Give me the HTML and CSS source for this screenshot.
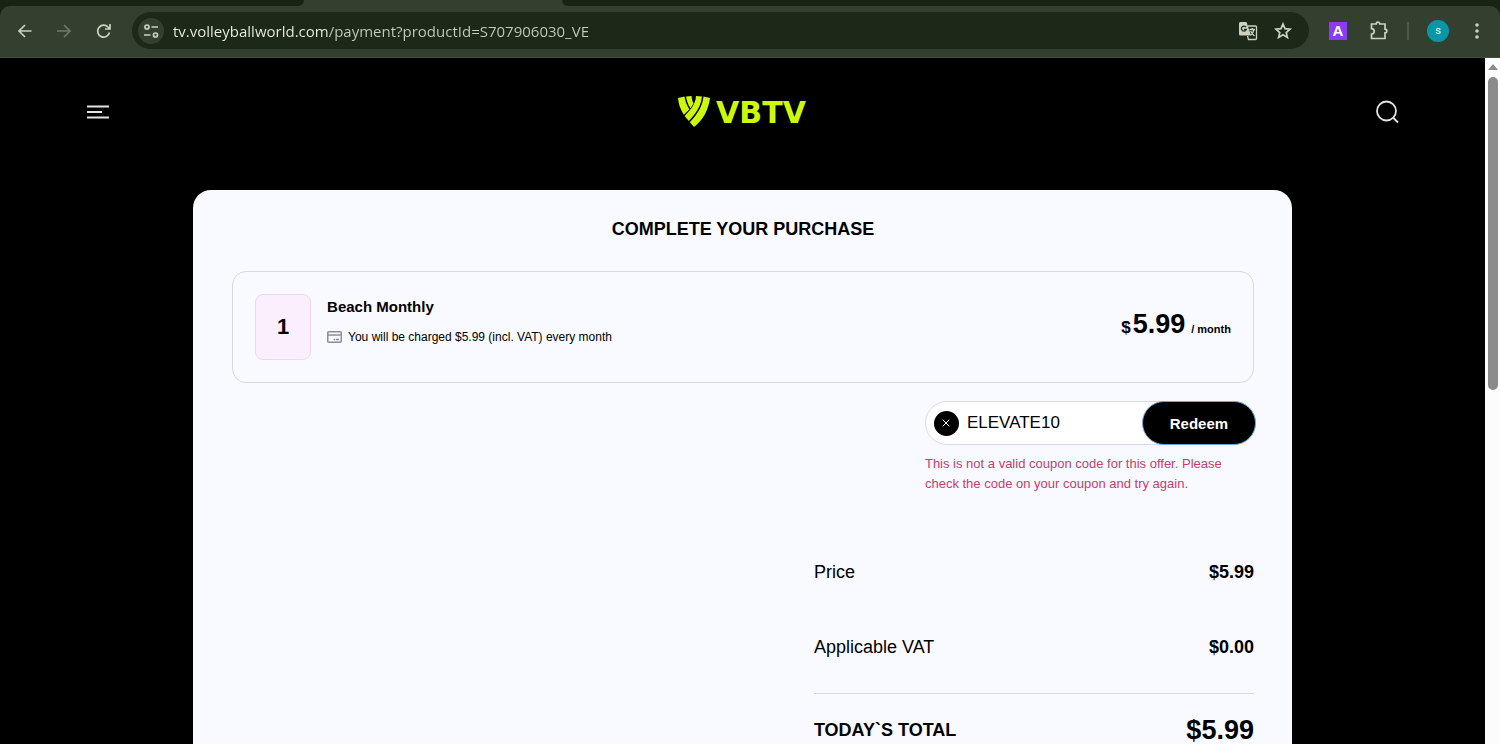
FILE: index.html
```
<!DOCTYPE html>
<html lang="en">
<head>
    <meta charset="UTF-8">
    <meta name="viewport" content="width=device-width, initial-scale=1.0">
    <title>VBTV - Complete your purchase</title>
    <link rel="stylesheet" href="styles.css">
</head>
<body>
    <div class="tab-strip">
        <div class="tabs-left"></div>
        <div class="tab-active"></div>
        <div class="tabs-right"></div>
    </div>
    <div class="toolbar">
        <button type="button" class="nav-btn" aria-label="Back">
            <svg width="20" height="20" viewBox="0 0 20 20"><path d="M16.500 10H4M10 4L4 10L10 16"/></svg>
        </button>
        <button type="button" class="nav-btn dim" aria-label="Forward">
            <svg width="20" height="20" viewBox="0 0 20 20"><path d="M3 10H16M10 4L16 10L10 16"/></svg>
        </button>
        <button type="button" class="nav-btn" aria-label="Reload">
            <svg width="20" height="20" viewBox="0 0 20 20"><path d="M16.500 11.500A6 6 0 1 1 15 6L16.500 7.500M17 3V8H12"/></svg>
        </button>
        <div class="address-bar">
            <button type="button" class="site-info" aria-label="Site information">
                <svg width="16" height="16" viewBox="0 0 16 16"><circle cx="4" cy="4" r="2"/><path d="M8.500 4H15M1 12H7.500"/><circle cx="12.500" cy="12" r="2"/></svg>
            </button>
            <input type="text" class="url" aria-label="Address" value="tv.volleyballworld.com/payment?productId=S707906030_VE">
            <button type="button" class="tool-btn" aria-label="Translate this page">
                <svg width="20" height="20" viewBox="0 0 20 20">
                    <path class="fill" d="M2.500 1H8.500L13 14.500H2.500A1.500 1.500 0 0 1 1 13V2.500A1.500 1.500 0 0 1 2.500 1Z"/>
                    <path class="thin" d="M10 5H17.500A1 1 0 0 1 18.500 6V17.500A1 1 0 0 1 17.500 18.500H10.500L9.500 15M11.500 8.500H17M14.200 7V8.500M16 8.500C15.500 11 14 13 12.500 14.300M12.600 10C13.500 12 15 13.500 16.500 15"/>
                    <path class="dark" d="M8 6.200A2.500 2.500 0 1 0 8.300 8.400H6"/>
                </svg>
            </button>
            <button type="button" class="tool-btn" aria-label="Bookmark this page">
                <svg width="20" height="20" viewBox="0 0 20 20"><path d="M10 3L12 7.700L17 8.200L13.200 11.500L14.400 16.400L10 13.800L5.600 16.400L6.800 11.500L3 8.200L8 7.700Z"/></svg>
            </button>
        </div>
        <button type="button" class="extension" aria-label="Extension">A</button>
        <button type="button" class="tool-btn" aria-label="Extensions">
            <svg width="22" height="22" viewBox="0 0 22 22"><path d="M3.500 4H8.200A1.800 1.800 0 0 1 11.800 4H17V9.200A1.800 1.800 0 0 1 17 12.800V18.500H3.500V14A2.700 2.700 0 0 0 3.500 8.600Z"/></svg>
        </button>
        <span class="divider"></span>
        <button type="button" class="profile" aria-label="Profile">s</button>
        <button type="button" class="tool-btn" aria-label="Browser menu">
            <svg width="20" height="20" viewBox="0 0 20 20"><g class="fill"><circle cx="10" cy="4" r="1.800"/><circle cx="10" cy="10" r="1.800"/><circle cx="10" cy="16" r="1.800"/></g></svg>
        </button>
    </div>

    <div class="window">
        <div class="page">
            <header class="site-header">
                <button type="button" class="header-btn" aria-label="Menu">
                    <svg width="22" height="22" viewBox="0 0 22 22"><path d="M0 5.500H22M0 11H15M0 16.500H22"/></svg>
                </button>
                <a href="#" class="logo">
                    <svg width="32" height="32" viewBox="0 0 32 32">
                        <path d="M0 2L6.500 0.600C7.500 6 9 10 11.500 13.300L5.800 18.700C2.500 13.500 0.500 8 0 2Z"/>
                        <path d="M8 0.500L13.500 0C13.800 3 14.300 5 15.500 7.500L12.500 12.200C10 9 8.800 5 8 0.500Z"/>
                        <path d="M18 0L24 0.500C23.200 9 18.500 17 10.800 25L6.600 20C13 13.500 17.500 8 18 0Z"/>
                        <path d="M25.500 0.600L32 2C30.500 14 25 24 16 31L11.800 26.300C19.500 18.500 24.500 10 25.500 0.600Z"/>
                    </svg>
                    <span>VBTV</span>
                </a>
                <button type="button" class="header-btn" aria-label="Search">
                    <svg width="24" height="24" viewBox="0 0 24 24"><circle cx="11.500" cy="11" r="9.500"/><path d="M18 17.500L23 22.500"/></svg>
                </button>
            </header>

            <main class="card">
                <h1>COMPLETE YOUR PURCHASE</h1>

                <section class="plan">
                    <div class="plan-number">1</div>
                    <div class="plan-info">
                        <h2>Beach Monthly</h2>
                        <p>
                            <svg width="15" height="12" viewBox="0 0 15 12"><rect x="0.750" y="0.750" width="13.500" height="10.500" rx="1"/><path d="M1 4H14M6.500 8.500H8M9 8.500H12"/></svg>
                            You will be charged $5.99 (incl. VAT) every month
                        </p>
                    </div>
                    <div class="plan-price">
                        <span class="currency">$</span>
                        <span class="amount">5.99</span>
                        <span class="period">/ month</span>
                    </div>
                </section>

                <form class="coupon">
                    <div class="coupon-box">
                        <button type="button" class="clear-btn" aria-label="Clear coupon code">
                            <svg width="8" height="8" viewBox="0 0 8 8"><path d="M0.700 0.700L7.300 7.300M7.300 0.700L0.700 7.300"/></svg>
                        </button>
                        <input type="text" class="coupon-input" name="coupon" aria-label="Coupon code" value="ELEVATE10">
                        <button type="submit" class="redeem-btn">Redeem</button>
                    </div>
                    <p class="coupon-error">This is not a valid coupon code for this offer. Please check the code on your coupon and try again.</p>
                </form>

                <table class="totals">
                    <tbody>
                        <tr>
                            <th scope="row">Price</th>
                            <td>$5.99</td>
                        </tr>
                        <tr>
                            <th scope="row">Applicable VAT</th>
                            <td>$0.00</td>
                        </tr>
                    </tbody>
                    <tfoot>
                        <tr>
                            <th scope="row">TODAY`S TOTAL</th>
                            <td>$5.99</td>
                        </tr>
                    </tfoot>
                </table>
            </main>
        </div>
        <div class="scrollbar">
            <svg width="10" height="6" viewBox="0 0 10 6"><path d="M5 0L10 6H0Z"/></svg>
            <div class="thumb"></div>
        </div>
    </div>
</body>
</html>
```
FILE: styles.css
```
* {
    box-sizing: border-box;
}
body {
    display: flex;
    flex-direction: column;
    height: 100vh;
    margin: 0;
    overflow: hidden;
    background-color: #182313;
    font-family: "Liberation Sans", Arial, sans-serif;
}
button {
    display: flex;
    align-items: center;
    justify-content: center;
    flex-shrink: 0;
    padding: 0;
    border: none;
    background: none;
    cursor: pointer;
}
svg {
    display: block;
    flex-shrink: 0;
    fill: none;
}

/* browser bar */
.tab-strip {
    display: flex;
    height: 6px;
    background-color: #33402f;
}
.tabs-left {
    width: 304px;
    border-bottom-right-radius: 8px;
    background-color: #182313;
}
.tab-active {
    width: 258px;
}
.tabs-right {
    flex: 1;
    border-bottom-left-radius: 8px;
    background-color: #182313;
}
.toolbar {
    display: flex;
    align-items: center;
    height: 52px;
    padding: 0 13px 2px 15px;
    border-bottom: 1px solid #4a4b3d;
    border-radius: 10px 10px 0 0;
    background-color: #33402f;
}
.toolbar svg {
    stroke: #c8d2bf;
    stroke-width: 1.7;
}
.toolbar .fill {
    fill: #c8d2bf;
    stroke: none;
}
.toolbar .thin {
    stroke-width: 1.3;
}
.toolbar .dark {
    stroke: #1c2918;
    stroke-width: 1.3;
}
.nav-btn {
    width: 20px;
    margin-right: 19px;
}
.nav-btn.dim {
    opacity: 0.4;
}
.address-bar {
    display: flex;
    align-items: center;
    flex: 1;
    height: 37px;
    padding: 0 16px 0 6px;
    border-radius: 19px;
    background-color: #1c2918;
}
.site-info {
    width: 26px;
    height: 26px;
    border-radius: 50%;
    background-color: #33402f;
}
.url {
    flex: 1;
    min-width: 0;
    height: 24px;
    margin-left: 9px;
    padding: 0;
    border: none;
    outline: none;
    background: linear-gradient(to right, #eef2e8 156px, #c5cdbb 156px);
    -webkit-background-clip: text;
    background-clip: text;
    color: transparent;
    font: 15px "Open Sans", sans-serif;
}
.address-bar .tool-btn {
    margin-left: 15px;
}
.extension {
    width: 18px;
    height: 18px;
    margin: 0 21px 0 20px;
    background-color: #8c3cf0;
    color: #fff;
    font: bold 15px "Liberation Sans", Arial, sans-serif;
}
.divider {
    width: 2px;
    height: 18px;
    margin: 0 18px 0 17px;
    background-color: #4b5946;
}
.profile {
    width: 22px;
    height: 22px;
    margin-right: 18px;
    border-radius: 50%;
    background-color: #0797a7;
    color: #fff;
    font: 11px Roboto, sans-serif;
}

/* page and its scrollbar */
.window {
    display: flex;
    flex: 1;
    min-height: 0;
}
.page {
    flex: 1;
    overflow: hidden;
    background-color: #000;
}
.scrollbar {
    display: flex;
    flex-direction: column;
    align-items: center;
    width: 15px;
    padding-top: 6px;
    background-color: #fcfcfc;
}
.scrollbar svg {
    fill: #8b8b8b;
}
.thumb {
    width: 10px;
    height: 46%;
    margin-top: 7px;
    border-radius: 5px;
    background-color: #8b8b8b;
}

/* header */
.site-header {
    display: flex;
    align-items: center;
    justify-content: space-between;
    height: 108px;
    padding: 0 86px 0 87px;
}
.header-btn svg {
    stroke: #e4e4e4;
    stroke-width: 1.8;
}
.logo {
    display: flex;
    align-items: center;
    gap: 6px;
    color: #cdf80a;
    font: bold 30px "DejaVu Sans", sans-serif;
    text-decoration: none;
}
.logo svg {
    fill: #cdf80a;
}

/* purchase card */
.card {
    display: flex;
    flex-direction: column;
    width: 74%;
    margin: 24px auto 0;
    padding: 27px 38px 27px 39px;
    border-radius: 18px;
    background-color: #f9faff;
    color: #000;
}
.card h1 {
    margin: 0 0 30px;
    font-size: 18px;
    line-height: 24px;
    text-align: center;
}
.plan {
    display: flex;
    align-items: center;
    padding: 22px;
    border: 1px solid #d7d9e0;
    border-radius: 14px;
}
.plan-number {
    display: flex;
    align-items: center;
    justify-content: center;
    width: 56px;
    height: 66px;
    border: 1px solid #f0d8f2;
    border-radius: 8px;
    background-color: #fbeffe;
    font-size: 22px;
    font-weight: bold;
}
.plan-info {
    flex: 1;
    align-self: flex-start;
    margin-left: 16px;
}
.plan-info h2 {
    margin: 3px 0 10px;
    font-size: 15px;
    line-height: 20px;
}
.plan-info p {
    display: flex;
    align-items: center;
    gap: 6px;
    margin: 0;
    font-size: 12px;
    line-height: 20px;
}
.plan-info svg {
    stroke: #8d8d98;
    stroke-width: 1.5;
}
.plan-price {
    display: flex;
    align-items: baseline;
    padding-bottom: 6px;
    font-weight: bold;
}
.currency {
    margin-right: 2px;
    font-size: 17px;
}
.amount {
    margin-right: 6px;
    font-size: 27px;
}
.period {
    font-size: 11px;
}

/* coupon */
.coupon {
    align-self: flex-end;
    width: 331px;
    margin-top: 18px;
    margin-right: -2px;
}
.coupon-box {
    display: flex;
    align-items: center;
    height: 44px;
    padding-left: 8px;
    border: 1px solid #d5dcef;
    border-radius: 22px;
    background-color: #fff;
}
.clear-btn {
    width: 25px;
    height: 25px;
    border-radius: 50%;
    background-color: #000;
}
.clear-btn svg {
    stroke: #fff;
}
.coupon-input {
    flex: 1;
    min-width: 0;
    padding: 0 8px;
    border: none;
    outline: none;
    background: none;
    font: 17px "Liberation Sans", Arial, sans-serif;
}
.redeem-btn {
    width: 114px;
    height: 44px;
    margin-right: -1px;
    border: 1px solid #6ea3dc;
    border-radius: 22px;
    background-color: #000;
    color: #fff;
    font: bold 15px "Liberation Sans", Arial, sans-serif;
}
.coupon-error {
    margin: 9px 0 0;
    color: #c93a70;
    font-size: 13px;
    line-height: 20px;
}

/* totals */
.totals {
    align-self: flex-end;
    width: 440px;
    margin-top: 41px;
    border-collapse: collapse;
    font-size: 18px;
}
.totals th,
.totals td {
    height: 75px;
    padding: 0;
}
.totals th {
    font-weight: normal;
    text-align: left;
}
.totals td {
    font-weight: bold;
    text-align: right;
}
.totals tbody::after {
    content: "";
    display: table-row;
    height: 8px;
}
.totals tfoot {
    border-top: 1px solid #d7d9e0;
}
.totals tfoot th {
    font-weight: bold;
}
.totals tfoot td {
    font-size: 27px;
}
```
